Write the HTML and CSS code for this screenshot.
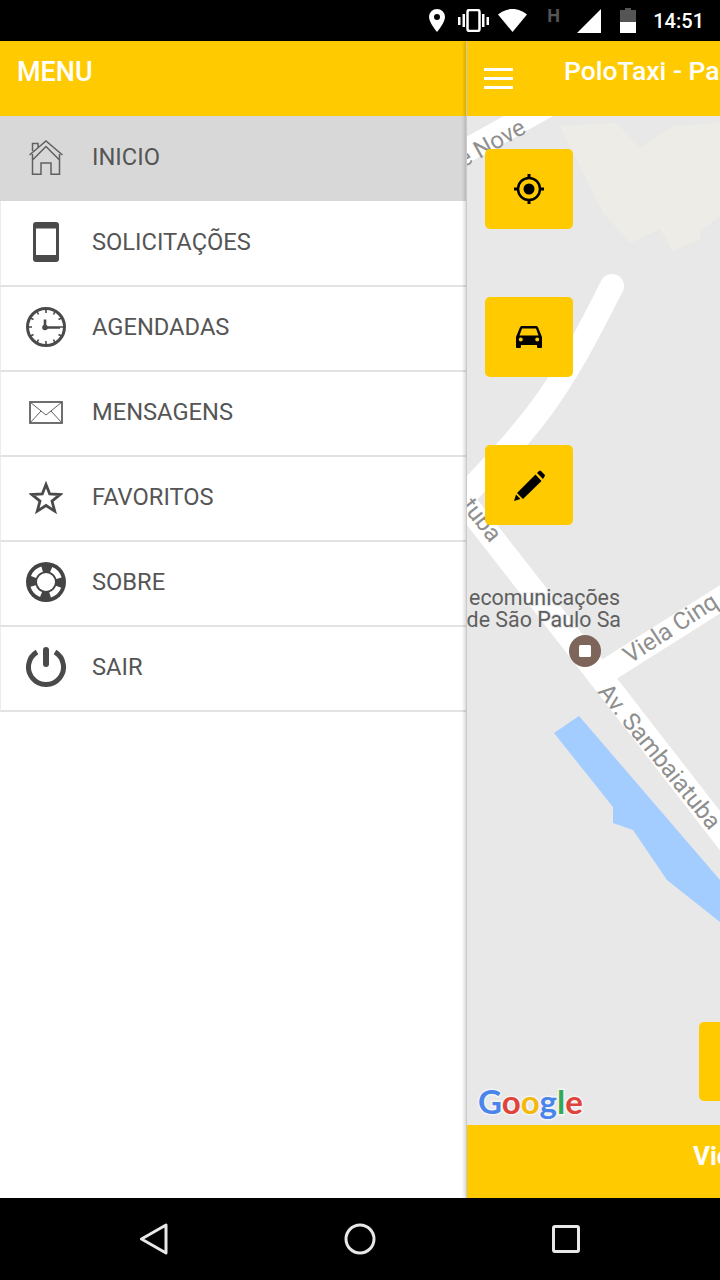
FILE: index.html
```html
<!DOCTYPE html>
<html lang="en">
<head>
    <meta charset="UTF-8">
    <meta name="viewport" content="width=device-width, initial-scale=1.0">
    <title>PoloTaxi</title>
    <link rel="stylesheet" href="styles.css">
</head>
<body>
    <!-- Android status bar -->
    <div class="status-bar">
        <svg class="st-pin" width="16" height="23" viewBox="0 0 16 23"><path fill="#fff" fill-rule="evenodd" d="M8 0a8 8 0 0 0-8 8c0 5.500 8 15 8 15s8-9.500 8-15a8 8 0 0 0-8-8zm0 5a3 3 0 1 1 0 6 3 3 0 0 1 0-6z"/></svg>
        <svg class="st-vibrate" width="31" height="23" viewBox="0 0 31 23"><rect x="0" y="8" width="2.500" height="8" fill="#fff"/><rect x="4.500" y="5" width="2.500" height="13" fill="#fff"/><rect x="9.500" y="1" width="12" height="21" rx="2" fill="none" stroke="#fff" stroke-width="2.500"/><rect x="24" y="5" width="2.500" height="13" fill="#fff"/><rect x="28.500" y="8" width="2.500" height="8" fill="#fff"/></svg>
        <svg class="st-wifi" width="29" height="23" viewBox="0 0 29 23"><path fill="#fff" d="M14.500 23 0 5.500C3.500 2.500 8.500 0 14.500 0S25.500 2.500 29 5.500z"/></svg>
        <span class="st-h">H</span>
        <svg class="st-signal" width="24" height="24" viewBox="0 0 24 24"><path fill="#fff" d="M24 0v24H0z"/></svg>
        <svg class="st-battery" width="16" height="25" viewBox="0 0 16 25"><path fill="#555" d="M5 0h6v2h5v12H0V2h5z"/><rect y="14" width="16" height="11" fill="#fff"/></svg>
        <span class="st-time">14:51</span>
    </div>

    <div class="app">
        <!-- Side menu -->
        <aside class="drawer">
            <div class="drawer-header">MENU</div>
            <ul class="menu">
                <li class="menu-item active">
                    <span class="menu-icon">
                        <svg width="34" height="35" viewBox="0 0 34 35" fill="none" stroke="#606060" stroke-width="1.500"><path d="M.5 15 17 1l16.500 14M3.500 11V3.500h5.500v3.500M3.500 20 17 6.500 30.500 20M3.500 14v20.300h8.500V23h10v11.300h8.500V14"/></svg>
                    </span>
                    <span class="menu-label">INICIO</span>
                </li>
                <li class="menu-item">
                    <span class="menu-icon">
                        <svg width="26" height="40" viewBox="0 0 26 40"><path fill="#4a4a4a" fill-rule="evenodd" d="M3 0h20a3 3 0 0 1 3 3v34a3 3 0 0 1-3 3H3a3 3 0 0 1-3-3V3a3 3 0 0 1 3-3zm0 6.500V33h20V6.500z"/></svg>
                    </span>
                    <span class="menu-label">SOLICITAÇÕES</span>
                </li>
                <li class="menu-item">
                    <span class="menu-icon">
                        <svg width="40" height="40" viewBox="0 0 40 40" fill="none" stroke="#4a4a4a"><circle cx="20" cy="20" r="18.500" stroke-width="3"/><path stroke-width="1.600" d="M20 2v4M20 34v4M2 20h4M34 20h4M11 4.500l1.500 3M29 4.500l-1.500 3M4.500 11l3 1.500M35.500 11l-3 1.500M4.500 29l3-1.500M35.500 29l-3-1.500M11 35.500l1.500-3M29 35.500l-1.500-3"/><path stroke-width="2.600" d="M19 12.500V20.500H34"/><circle cx="19" cy="20.500" r="2.800" fill="#4a4a4a" stroke="none"/></svg>
                    </span>
                    <span class="menu-label">AGENDADAS</span>
                </li>
                <li class="menu-item">
                    <span class="menu-icon">
                        <svg width="34" height="23" viewBox="0 0 34 23" fill="none" stroke="#606060"><rect x="1" y="1" width="32" height="21" stroke-width="1.800"/><path stroke-width="1" d="M1 1l16 13L33 1M1 22l11-12M33 22 22 10"/></svg>
                    </span>
                    <span class="menu-label">MENSAGENS</span>
                </li>
                <li class="menu-item">
                    <span class="menu-icon">
                        <svg width="34" height="33" viewBox="0 0 34 33"><path fill="none" stroke="#4a4a4a" stroke-width="2.800" d="M17 3.500 20.700 13l10.300.6-8 6.500 2.700 10L17 24.500 8.300 30.100l2.700-10-8-6.500 10.300-.6z"/></svg>
                    </span>
                    <span class="menu-label">FAVORITOS</span>
                </li>
                <li class="menu-item">
                    <span class="menu-icon">
                        <svg width="40" height="40" viewBox="0 0 40 40"><circle cx="20" cy="20" r="20" fill="#444"/><circle cx="20" cy="20" r="13.500" fill="none" stroke="#fff" stroke-width="5.500" stroke-dasharray="12 9.200" transform="rotate(21 20 20)"/><circle cx="20" cy="20" r="9" fill="#fff"/></svg>
                    </span>
                    <span class="menu-label">SOBRE</span>
                </li>
                <li class="menu-item">
                    <span class="menu-icon">
                        <svg width="40" height="40" viewBox="0 0 40 40" fill="none" stroke="#4a4a4a" stroke-width="5"><path d="M11 5a17.500 17.500 0 1 0 18 0"/><path stroke-linecap="round" stroke-width="6" d="M20 3v14"/></svg>
                    </span>
                    <span class="menu-label">SAIR</span>
                </li>
            </ul>
        </aside>

        <!-- App screen pushed aside by the menu -->
        <main class="screen">
            <header class="toolbar">
                <span class="burger"><i></i><i></i><i></i></span>
                <span class="toolbar-title">PoloTaxi - Pa</span>
            </header>

            <div class="map">
                <svg class="map-canvas" width="253" height="1009" viewBox="467 116 253 1009">
                    <rect x="467" y="116" width="253" height="1009" fill="#e8e8e8"/>
                    <path fill="#eeece6" d="M560 126l57-3 23 25 33-22 47-3v93l-20 15v8l-27 12-13-22-30 14-27-30z"/>
                    <path class="road" stroke-width="24" d="M455 157 550 104"/>
                    <path class="road" stroke-width="24" stroke-linecap="round" d="M612 286C592 325 570 370 540 410 520 437 490 470 455 505"/>
                    <path class="road" stroke-width="24" d="M450 484 603 680 735 850"/>
                    <path class="road" stroke-width="24" d="M600 675 735 590"/>
                    <path fill="#a3ccff" d="M554 733l25-17 141 164v42l-53-42-34-50-20-7v-16z"/>

                    <text class="map-label" transform="translate(463 168) rotate(-29)">e Nove</text>
                    <text class="map-label" transform="translate(461 506) rotate(52)">tuba</text>
                    <text class="map-label" transform="translate(630 664) rotate(-33)">Viela Cinq</text>
                    <text class="map-label" transform="translate(597 692) rotate(51)">Av. Sambaiatuba</text>
                    <text class="map-poi" x="620" y="605" text-anchor="end">ecomunicações</text>
                    <text class="map-poi" x="621" y="627" text-anchor="end">de São Paulo Sa</text>

                    <circle cx="585" cy="651" r="16" fill="#7d655a"/>
                    <rect x="579" y="645" width="12" height="12" rx="1.500" fill="#fff"/>

                    <text class="google" x="478" y="1114"><tspan fill="#4a85ec">G</tspan><tspan fill="#e0433a">o</tspan><tspan fill="#f2b90f">o</tspan><tspan fill="#4a85ec">g</tspan><tspan fill="#34a853">l</tspan><tspan fill="#e0433a">e</tspan></text>
                </svg>

                <div class="map-actions">
                    <button class="map-btn" type="button">
                        <svg width="30" height="30" viewBox="0 0 30 30" fill="none" stroke="#000"><circle cx="15" cy="15" r="11" stroke-width="2.500"/><circle cx="15" cy="15" r="5.500" fill="#000" stroke="none"/><path stroke-width="3" d="M15 0v4M15 26v4M0 15h4M26 15h4"/></svg>
                    </button>
                    <button class="map-btn" type="button">
                        <svg width="26" height="22" viewBox="0 0 26 22"><path fill="#000" fill-rule="evenodd" d="M6 0h14c1 0 1.800.6 2.100 1.500L26 11v10a1 1 0 0 1-1 1h-3a1 1 0 0 1-1-1v-2H5v2a1 1 0 0 1-1 1H1a1 1 0 0 1-1-1V11L3.900 1.500C4.200.6 5 0 6 0zm0 2.500L3.500 9.500h19L20 2.500zM4.800 11.500a2 2 0 1 0 0 4 2 2 0 0 0 0-4zm16.400 0a2 2 0 1 0 0 4 2 2 0 0 0 0-4z"/></svg>
                    </button>
                    <button class="map-btn" type="button">
                        <svg width="31" height="31" viewBox="0 0 31 31"><path fill="#000" d="M3 23 21.500 4.500 27.500 11 9 29zM0 31l2-6.500L6.500 29zM23 3l2-2a1.500 1.500 0 0 1 2 0l3.500 3.500a1.500 1.500 0 0 1 0 2L29 9z"/></svg>
                    </button>
                </div>
                <div class="map-btn-side"></div>
            </div>

            <footer class="screen-footer">Vic</footer>
        </main>
    </div>

    <!-- Android nav bar -->
    <div class="nav-bar">
        <svg width="28" height="32" viewBox="0 0 28 32"><path fill="none" stroke="#e8e8e8" stroke-width="3" stroke-linejoin="round" d="M26 2v28L1.500 16z"/></svg>
        <svg width="32" height="32" viewBox="0 0 32 32"><circle cx="16" cy="16" r="14" fill="none" stroke="#e8e8e8" stroke-width="3"/></svg>
        <svg width="28" height="28" viewBox="0 0 28 28"><rect x="1.500" y="1.500" width="25" height="25" rx="1.500" fill="none" stroke="#e8e8e8" stroke-width="3"/></svg>
    </div>
</body>
</html>
```

FILE: styles.css
```css
/* Base Styling */
html, body {
    margin: 0;
    padding: 0;
}

body {
    width: 720px;
    height: 1280px;
    overflow: hidden;
    display: flex;
    flex-direction: column;
    font-family: Roboto, 'Noto Sans', sans-serif;
    background: #000;
}

/* Status bar */
.status-bar {
    height: 41px;
    flex: none;
    background: #000;
    display: flex;
    align-items: flex-start;
    padding: 9px 16px 0 0;
    box-sizing: border-box;
    justify-content: flex-end;
}

.st-vibrate {
    margin-left: 13px;
}

.st-wifi {
    margin-left: 9px;
}

.st-h {
    margin: -3px 0 0 20px;
    width: 13px;
    font-size: 18px;
    line-height: 20px;
    font-weight: 700;
    color: #555;
}

.st-signal {
    margin-left: 17px;
}

.st-battery {
    margin: -1px 0 0 19px;
}

.st-time {
    margin-left: 17px;
    font-size: 20px;
    line-height: 24px;
    font-weight: 500;
    color: #fff;
}

/* Main area */
.app {
    flex: 1;
    display: flex;
    min-height: 0;
}

.drawer {
    width: 466px;
    flex: none;
    background: #fff;
}

.drawer-header {
    height: 75px;
    padding: 15px 0 0 17px;
    box-sizing: border-box;
    background: #ffcb00;
    color: #fff;
    font-size: 27px;
    line-height: 32px;
    font-weight: 500;
}

.menu {
    list-style: none;
    margin: 0;
    padding: 0;
}

.menu-item {
    height: 85px;
    box-sizing: border-box;
    display: flex;
    align-items: center;
    padding-bottom: 3px;
    border-bottom: 2px solid #e2e2e2;
    border-left: 1px solid #ececec;
}

.menu-item.active {
    height: 86px;
    background: #d8d8d8;
    background-clip: padding-box;
    border-left-color: #d8d8d8;
    border-bottom: 1px solid #fff;
}

.menu-icon {
    width: 40px;
    margin-left: 25px;
    display: flex;
    justify-content: center;
}

.menu-label {
    margin-left: 26px;
    font-size: 23.7px;
    color: #555;
}

/* App screen */
.screen {
    position: relative;
    flex: 1;
    min-width: 0;
    display: flex;
    flex-direction: column;
    border-left: 1px solid #c9c9c9;
    box-shadow: -2px 0 3px rgba(0, 0, 0, 0.15);
    overflow: hidden;
    clip-path: inset(0 0 0 -6px);
}

.toolbar {
    height: 75px;
    flex: none;
    background: #ffcb00;
    display: flex;
    align-items: flex-start;
    white-space: nowrap;
    overflow: hidden;
}

.burger {
    margin: 27px 0 0 17px;
    width: 29px;
    flex: none;
    display: flex;
    flex-direction: column;
    gap: 6px;
}

.burger i {
    display: block;
    height: 3px;
    background: #fff;
}

.toolbar-title {
    margin: 14px 0 0 51px;
    color: #fff;
    font-size: 26.500px;
    line-height: 32px;
    font-weight: 500;
}

.map {
    position: relative;
    flex: 1;
    min-height: 0;
    overflow: hidden;
    display: flex;
}

.map-canvas {
    position: absolute;
    top: 0;
    left: 0;
}

.road {
    fill: none;
    stroke: #fff;
}

.map-label {
    font-size: 24px;
    fill: #8f8f8f;
}

.map-poi {
    font-size: 21.400px;
    fill: #5f5f5f;
    stroke: #e8e8e8;
    stroke-width: 2px;
    paint-order: stroke;
}

.google {
    font-family: Lato, sans-serif;
    font-size: 33px;
    font-weight: 700;
    stroke: #f4f4f4;
    stroke-width: 3px;
    paint-order: stroke;
}

.map-actions {
    position: relative;
    display: flex;
    flex-direction: column;
    gap: 68px;
    padding: 33px 0 0 18px;
}

.map-btn {
    width: 88px;
    height: 80px;
    padding: 0;
    border: none;
    border-radius: 5px;
    background: #ffcb00;
    display: flex;
    align-items: center;
    justify-content: center;
}

.map-btn-side {
    position: absolute;
    left: 232px;
    top: 906px;
    width: 88px;
    height: 79px;
    border-radius: 5px;
    background: #ffcb00;
}

.screen-footer {
    height: 73px;
    flex: none;
    box-sizing: border-box;
    padding: 13px 0 0 226px;
    background: #ffcb00;
    color: #fff;
    font-size: 26px;
    line-height: 36px;
    font-weight: 700;
    white-space: nowrap;
    overflow: hidden;
}

/* Nav bar */
.nav-bar {
    height: 82px;
    flex: none;
    background: #000;
    display: flex;
    align-items: center;
    padding-left: 140px;
}

.nav-bar svg + svg {
    margin-left: 176px;
}
```
